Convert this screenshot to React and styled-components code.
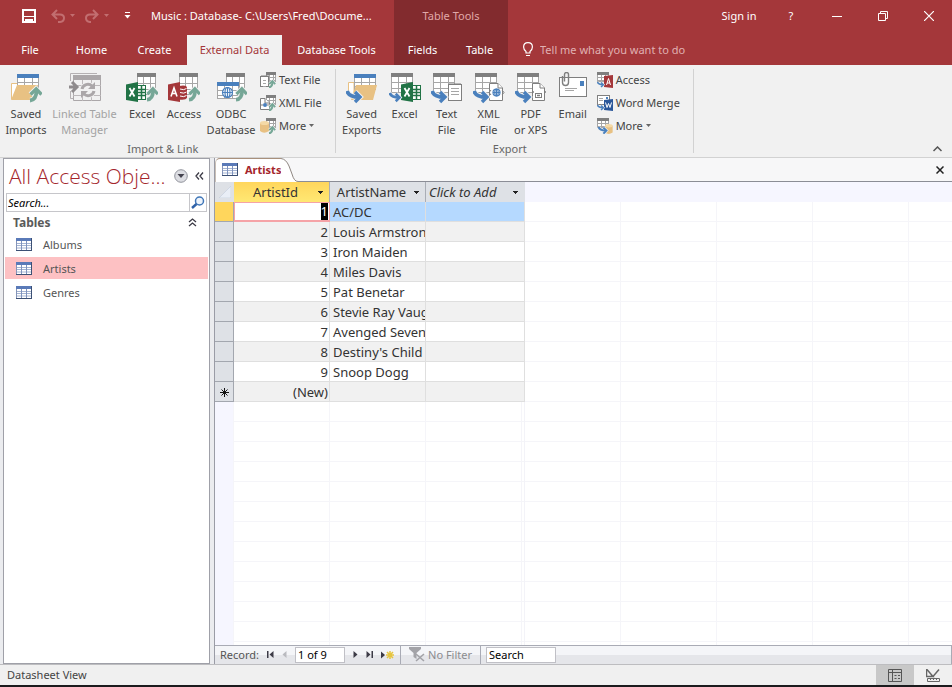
import React, { useState } from "react";
import styled, { createGlobalStyle, css } from "styled-components";

const BLUE = "#4a80bd";
const GREEN = "#76a797";
const GREY = "#7f7f7f";
const FOLDER = "#e8c183";

/* ---------- icon parts ---------- */

const Sheet = ({ x, y, w = 19, h = 20, head = 4, color = GREY, line = "#a6a6a6" }) => {
    const bodyTop = y + head;
    const rowHeight = (h - head) / 3;
    const colWidth = w / 3;
    return (
        <g>
            <rect x={x + 0.5} y={y + 0.5} width={w - 1} height={h - 1} fill="#fff" stroke={line} />
            <rect x={x} y={y} width={w} height={head} fill={color} />
            {[1, 2].map((i) => (
                <path
                    key={i}
                    stroke={line}
                    fill="none"
                    d={`M${x} ${Math.round(bodyTop + i * rowHeight) + 0.5}h${w}M${Math.round(x + i * colWidth) + 0.5} ${bodyTop}v${h - head}`}
                />
            ))}
        </g>
    );
};

const ImportArrow = ({ x = 0, y = 0, scale = 1 }) => (
    <g transform={`translate(${x} ${y}) scale(${scale})`} fill="none">
        <path d="M0 13.5Q6.5 13 6.5 3M0.5 7.5L6.2 2L11.5 7.5" stroke="#f1f1f1" strokeWidth="5.4" />
        <path d="M0 13.5Q6.5 13 6.5 3" stroke={GREEN} strokeWidth="3.8" />
        <path d="M0.5 7.5L6.2 2L11.5 7.5" stroke={GREEN} strokeWidth="3.4" />
    </g>
);

const ExportArrow = ({ x = 0, y = 0, scale = 1 }) => (
    <g transform={`translate(${x} ${y}) scale(${scale})`} fill="none">
        <path d="M1 0Q3 6 13 6M9 1L14 6L9 11" stroke="#f1f1f1" strokeWidth="5.4" />
        <path d="M1 0Q3 6 13 6" stroke={BLUE} strokeWidth="3.8" />
        <path d="M9 1L14 6L9 11" stroke={BLUE} strokeWidth="3.4" />
    </g>
);

const ExcelBook = ({ x, y }) => (
    <g transform={`translate(${x} ${y})`}>
        <rect x="11.5" y="3.5" width="8" height="14" fill="#fff" stroke="#217346" />
        <path d="M12 7.5h7M12 10.5h7M12 13.5h7M15.5 4v13" stroke="#217346" strokeWidth="1.5" />
        <path d="M0 2.5L12 0V20L0 18Z" fill="#217346" />
        <path d="M3.5 6L8.5 14.5M8.5 6L3.5 14.5" stroke="#fff" strokeWidth="1.8" />
    </g>
);

const AccessBook = ({ x, y }) => (
    <g transform={`translate(${x} ${y})`}>
        <path d="M11 4Q19 2.5 19 6V15.5Q18 18.5 11 17.5Z" fill="#a4373a" />
        <path d="M12 7Q16 8.5 18.5 6.5M12 10.5Q16 12 18.5 10M12 14Q16 15.5 18.5 13.5" stroke="#fff" fill="none" />
        <path d="M0 2.5L12 0V20L0 18Z" fill="#a4373a" />
        <path d="M3 14.5L6 6L9 14.5M4 11.5H8" stroke="#fff" strokeWidth="1.6" fill="none" />
    </g>
);

const Globe = ({ cx, cy, r }) => (
    <g fill="#fff" stroke={BLUE} strokeWidth="1.2">
        <circle cx={cx} cy={cy} r={r} />
        <ellipse cx={cx} cy={cy} rx={r / 2} ry={r} fill="none" />
        <path d={`M${cx - r} ${cy}h${r * 2}M${cx} ${cy - r}v${r * 2}`} />
    </g>
);

const Page = ({ x, y, w = 15, h = 17 }) => (
    <g fill="#fff" stroke={GREY} transform={`translate(${x} ${y})`}>
        <path d={`M0.5 0.5H${w - 5}L${w - 0.5} 5V${h - 0.5}H0.5Z`} />
        <path d={`M${w - 5} 0.5V5H${w - 0.5}`} />
    </g>
);

const Notepad = ({ x, y, w = 14, h = 17 }) => (
    <g transform={`translate(${x} ${y})`}>
        <rect x="0.5" y="1.5" width={w - 1} height={h - 2} fill="#fff" stroke={GREY} />
        <path d={`M1.5 1h${w - 2}`} stroke={GREY} strokeWidth="2" strokeDasharray="1 1" />
        <path d={`M3 5.5h${w - 6}M3 8.5h${w - 6}M3 11.5h${w - 6}`} stroke="#a6a6a6" />
    </g>
);

const Cylinder = ({ x, y }) => (
    <g transform={`translate(${x} ${y})`}>
        <path d="M0 2V10Q4 13.5 9 10V2Z" fill={FOLDER} />
        <ellipse cx="4.5" cy="2" rx="4.5" ry="2" fill="#f4d9a6" />
    </g>
);

const Big = ({ children }) => <svg width="32" height="32" viewBox="0 0 32 32" aria-hidden="true">{children}</svg>;
const Small = ({ children }) => <svg width="16" height="16" viewBox="0 0 16 16" aria-hidden="true">{children}</svg>;

/* ---------- ribbon icons ---------- */

const SavedImportsIcon = () => (
    <Big>
        <path d="M1.5 27V11.5H8V27" fill="#fff" stroke={FOLDER} />
        <Sheet x={7} y={2} w={22} h={16} color={BLUE} />
        <path d="M7 13H28L23 28H1Z" fill={FOLDER} />
        <ImportArrow x={20} y={15} />
    </Big>
);

const SavedExportsIcon = () => (
    <Big>
        <path d="M2.5 22V10.5H8V27" fill="#fff" stroke={FOLDER} />
        <Sheet x={8} y={2} w={22} h={16} color={BLUE} />
        <path d="M10 13H31L27 28H5Z" fill={FOLDER} />
        <ExportArrow y={19} />
    </Big>
);

const LinkedTableIcon = () => (
    <Big>
        <path d="M1.5 9V1.5H28M1.5 19V26.5H4" fill="none" stroke="#b5b1b3" />
        <path d="M4.5 4V28.5H31.5V4" fill="#f1f1f1" stroke="#aba7a9" />
        <rect x="4" y="3" width="28" height="5" fill="#aba7a9" />
        <path d="M4 13.5h28M4 23.5h28M13.5 8v6M22.5 8v6M13.5 24v5M22.5 24v5" stroke="#bdb9bb" />
        <circle cx="19" cy="18" r="8" fill="#f1f1f1" />
        <path d="M13 17a6 6 0 0 1 10-3M25 19a6 6 0 0 1-10 3" fill="none" stroke="#aba7a9" strokeWidth="3" />
        <path d="M26 10v7h-7ZM12 26v-7h7Z" fill="#aba7a9" />
        <path d="M0 15h7M3 10l5 5-5 5" fill="none" stroke="#8f8b8d" strokeWidth="3" />
    </Big>
);

const ImportExcelIcon = () => (
    <Big>
        <Sheet x={11} y={1} w={19} h={22} />
        <ExcelBook x={0} y={10} />
        <ImportArrow x={21} y={15} scale={0.95} />
    </Big>
);

const ImportAccessIcon = () => (
    <Big>
        <Sheet x={11} y={1} w={19} h={22} />
        <AccessBook x={0} y={10} />
        <ImportArrow x={21} y={15} scale={0.95} />
    </Big>
);

const OdbcIcon = () => (
    <Big>
        <Sheet x={11} y={1} w={19} h={22} />
        <Sheet x={2} y={10} w={22} h={17} color={BLUE} />
        <Globe cx={12.5} cy={20.5} r={5} />
        <ImportArrow x={21} y={15} scale={0.95} />
    </Big>
);

const ExportExcelIcon = () => (
    <Big>
        <Sheet x={2} y={1} w={22} h={20} />
        <ExcelBook x={12} y={10} />
        <ExportArrow y={21} scale={0.75} />
    </Big>
);

const ExportTextIcon = () => (
    <Big>
        <Sheet x={2} y={1} w={22} h={20} />
        <Notepad x={17} y={11} w={14} h={18} />
        <ExportArrow y={19} />
    </Big>
);

const ExportXmlIcon = () => (
    <Big>
        <Sheet x={2} y={1} w={22} h={20} />
        <Page x={16} y={11} w={14} h={18} />
        <Globe cx={23.5} cy={20.5} r={3.5} />
        <path d="M18 18l-2 2.5 2 2.5M29 18l2 2.5-2 2.5" fill="none" stroke={GREY} />
        <ExportArrow y={19} />
    </Big>
);

const ExportPdfIcon = () => (
    <Big>
        <Sheet x={2} y={1} w={22} h={20} />
        <Page x={17} y={11} w={13} h={18} />
        <rect x="20.5" y="21.5" width="6" height="4" fill="#fff" stroke={GREY} />
        <path d="M18 19v2M30 19v2M22 23.5h3" stroke={GREY} strokeWidth="1.5" />
        <ExportArrow y={19} />
    </Big>
);

const EmailIcon = () => (
    <Big>
        <rect x="2.5" y="5.5" width="27" height="19" fill="#fff" stroke={GREY} />
        <rect x="23" y="9" width="4" height="5" fill={BLUE} />
        <path d="M8 16.5h12M8 18.5h9" stroke="#a6a6a6" />
        <path d="M5.5 4V10.5Q5.5 13.5 8.5 13.5T11.5 10.5V2.5Q11.5 0.5 9.5 0.5T7.5 2.5V9.5" fill="none" stroke={GREY} strokeWidth="1.4" />
    </Big>
);

const SmallSheet = ({ x = 6, y = 0, w = 10 }) => <Sheet x={x} y={y} w={w} h={10} head={3} />;

const TextFileIcon = () => (
    <Small>
        <SmallSheet />
        <Notepad x={0} y={3} w={9} h={12} />
        <ImportArrow x={9} y={8} scale={0.54} />
    </Small>
);

const XmlFileIcon = () => (
    <Small>
        <SmallSheet />
        <Page x={0} y={3} w={10} h={12} />
        <circle cx="5" cy="10" r="2" fill={BLUE} />
        <path d="M2 9v2M8 9v2" stroke={GREY} />
        <ImportArrow x={9} y={8} scale={0.54} />
    </Small>
);

const MoreImportIcon = () => (
    <Small>
        <SmallSheet />
        <Cylinder x={0} y={3} />
        <ImportArrow x={9} y={8} scale={0.54} />
    </Small>
);

const AccessExportIcon = () => (
    <Small>
        <SmallSheet x={0} w={12} />
        <path d="M7 4L16 3V16L7 15Z" fill="#a4373a" />
        <path d="M9.5 13L11.5 6.5L13.5 13M10 11h3" fill="none" stroke="#fff" />
        <ExportArrow y={10} scale={0.45} />
    </Small>
);

const WordMergeIcon = () => (
    <Small>
        <rect x="0.5" y="0.5" width="12" height="9" fill="#fff" stroke={GREY} />
        <path d="M2 3.5h4M2 5.5h4" stroke="#a6a6a6" />
        <rect x="9" y="2" width="2" height="2" fill={BLUE} />
        <path d="M7 5L16 4V16L7 15Z" fill="#2b579a" />
        <path d="M8.5 7.5l1.5 5 1.5-4 1.5 4 1.5-5" fill="none" stroke="#fff" />
        <ExportArrow y={10} scale={0.45} />
    </Small>
);

const MoreExportIcon = () => (
    <Small>
        <SmallSheet x={0} w={12} />
        <g transform="translate(8 6) scale(.85)">
            <Cylinder x={0} y={0} />
        </g>
        <ExportArrow x={1} y={9} scale={0.6} />
    </Small>
);

/* ---------- small glyphs ---------- */

const Caret = ({ color = "currentColor" }) => (
    <svg width="5" height="3" viewBox="0 0 5 3" aria-hidden="true">
        <path d="M0 0h5L2.5 3Z" fill={color} />
    </svg>
);

const HeadCaret = () => (
    <svg width="7" height="5" viewBox="0 0 7 5" aria-hidden="true">
        <path d="M1 1h5v1h-1v1h-1v1h-1v-1h-1v-1h-1Z" fill="#222" />
    </svg>
);

const TableIcon = () => (
    <svg width="16" height="13" viewBox="0 0 16 13" aria-hidden="true">
        <rect x="0.5" y="0.5" width="15" height="12" fill="#fff" stroke="#8494b8" />
        <path d="M0 1.5h16" stroke="#5a7ab8" strokeWidth="3" />
        <path d="M1 5.5h14M1 7.5h14M1 10h14" stroke="#a4b4d3" />
        <path d="M5.5 3v9M10.5 3v9" stroke="#7f93bd" />
        <path d="M0 12.5h16M15.5 0v13" stroke="#3c5074" />
    </svg>
);

/* ---------- data ---------- */

const ribbonTabs = [
    { name: "File", width: 60 },
    { name: "Home", width: 63 },
    { name: "Create", width: 63 },
    { name: "External Data", width: 97 },
    { name: "Database Tools", width: 107 },
];

const importButtons = [
    { label: "Saved\nImports", icon: <SavedImportsIcon />, width: 44 },
    { label: "Linked Table\nManager", icon: <LinkedTableIcon />, width: 73, disabled: true },
    { label: "Excel", icon: <ImportExcelIcon />, width: 42 },
    { label: "Access", icon: <ImportAccessIcon />, width: 42 },
    { label: "ODBC\nDatabase", icon: <OdbcIcon />, width: 52 },
];

const exportButtons = [
    { label: "Saved\nExports", icon: <SavedExportsIcon />, width: 44 },
    { label: "Excel", icon: <ExportExcelIcon />, width: 42 },
    { label: "Text\nFile", icon: <ExportTextIcon />, width: 42 },
    { label: "XML\nFile", icon: <ExportXmlIcon />, width: 42 },
    { label: "PDF\nor XPS", icon: <ExportPdfIcon />, width: 42 },
    { label: "Email", icon: <EmailIcon />, width: 42 },
];

const importSmall = [
    { label: "Text File", icon: <TextFileIcon /> },
    { label: "XML File", icon: <XmlFileIcon /> },
    { label: "More", icon: <MoreImportIcon />, menu: true },
];

const exportSmall = [
    { label: "Access", icon: <AccessExportIcon /> },
    { label: "Word Merge", icon: <WordMergeIcon /> },
    { label: "More", icon: <MoreExportIcon />, menu: true },
];

const artists = [
    "AC/DC",
    "Louis Armstrong",
    "Iron Maiden",
    "Miles Davis",
    "Pat Benetar",
    "Stevie Ray Vaughan",
    "Avenged Sevenfold",
    "Destiny's Child",
    "Snoop Dogg",
];

/* ---------- components ---------- */

const RibbonGroup = ({ title, buttons, smallButtons }) => (
    <Group>
        <GroupBody>
            {buttons.map((b) => (
                <BigButton key={b.label} $width={b.width} disabled={b.disabled}>
                    {b.icon}
                    <span>{b.label}</span>
                </BigButton>
            ))}
            <SmallColumn>
                {smallButtons.map((b) => (
                    <SmallButton key={b.label}>
                        {b.icon}
                        {b.label}
                        {b.menu && <Caret color="#666" />}
                    </SmallButton>
                ))}
            </SmallColumn>
        </GroupBody>
        <GroupTitle>{title}</GroupTitle>
    </Group>
);

const Header = ({ tab, setTab }) => (
    <TopBar>
        <TopColumn>
            <TitleRow>
                <QuickButton aria-label="Save" $after={5}>
                    <svg width="14" height="14" viewBox="0 0 14 14">
                        <path d="M1 1h12v12H1Z" fill="none" stroke="#fff" strokeWidth="2" />
                        <path d="M1 7.5h12" stroke="#fff" />
                        <path d="M3 10h8v4h-2v-2h-2v2H3Z" fill="#fff" />
                    </svg>
                </QuickButton>
                <QuickButton aria-label="Undo" disabled>
                    <svg width="14" height="14" viewBox="0 0 14 14" fill="none" stroke="currentColor" strokeWidth="2">
                        <path d="M6 1L1.5 5.5L6 10M2 5.5H9Q13 5.5 13 9T9 13H7" />
                    </svg>
                    <Caret />
                </QuickButton>
                <QuickButton aria-label="Redo" disabled $after={5}>
                    <svg width="14" height="14" viewBox="0 0 14 14" fill="none" stroke="currentColor" strokeWidth="2">
                        <path d="M8 1L12.5 5.5L8 10M12 5.5H5Q1 5.5 1 9T5 13H6" />
                    </svg>
                    <Caret />
                </QuickButton>
                <QuickButton aria-label="Customize toolbar" $after={10}>
                    <svg width="7" height="7" viewBox="0 0 7 7">
                        <path d="M1 0.5h5" stroke="#fff" />
                        <path d="M0.5 3h6L3.5 6.5Z" fill="#fff" />
                    </svg>
                </QuickButton>
                <Title>Music : Database- C:\Users\Fred\Docume...</Title>
            </TitleRow>
            <TabRow>
                {ribbonTabs.map((t) => (
                    <RibbonTab key={t.name} $width={t.width} $active={tab === t.name} onClick={() => setTab(t.name)}>
                        {t.name}
                    </RibbonTab>
                ))}
            </TabRow>
        </TopColumn>
        <ContextColumn>
            <ContextTitle>Table Tools</ContextTitle>
            <TabRow>
                <RibbonTab $width={57}>Fields</RibbonTab>
                <RibbonTab $width={57}>Table</RibbonTab>
            </TabRow>
        </ContextColumn>
        <TopColumn $grow>
            <WindowRow>
                <SignIn href="#signin">Sign in</SignIn>
                <WindowButton aria-label="Help">?</WindowButton>
                <WindowButton aria-label="Minimize">
                    <svg width="10" height="10" viewBox="0 0 10 10"><path d="M0 5.5h10" stroke="#fff" /></svg>
                </WindowButton>
                <WindowButton aria-label="Restore">
                    <svg width="10" height="10" viewBox="0 0 10 10" fill="none" stroke="#fff">
                        <path d="M0.5 2.5h7v7h-7ZM2.5 2.5V0.5h7v7H7.5" />
                    </svg>
                </WindowButton>
                <WindowButton aria-label="Close">
                    <svg width="10" height="10" viewBox="0 0 10 10"><path d="M0 0L10 10M10 0L0 10" stroke="#fff" strokeWidth="1.2" /></svg>
                </WindowButton>
            </WindowRow>
            <TellMe>
                <svg width="10" height="15" viewBox="0 0 10 15" fill="none" stroke="#fff" strokeWidth="1.2" aria-hidden="true">
                    <path d="M3 11V9.5Q0.6 7.5 0.6 5Q0.6 0.7 5 0.7T9.4 5Q9.4 7.5 7 9.5V11ZM3 13.5h4" />
                </svg>
                <input aria-label="Tell me what you want to do" placeholder="Tell me what you want to do" />
            </TellMe>
        </TopColumn>
    </TopBar>
);

const NavigationPane = () => {
    const [selected, setSelected] = useState("Artists");

    return (
        <NavPane>
            <NavHead>
                <h1>All Access Obje...</h1>
                <PlainButton aria-label="Filter objects">
                    <svg width="14" height="14" viewBox="0 0 14 14">
                        <circle cx="7" cy="7" r="6.3" fill="#dcdde2" stroke="#92949d" />
                        <path d="M3.5 5h7L7 9Z" fill="#44434f" />
                    </svg>
                </PlainButton>
                <PlainButton aria-label="Collapse pane">
                    <svg width="9" height="8" viewBox="0 0 9 8" fill="none" stroke="#3c3b46" strokeWidth="1.3">
                        <path d="M4 0.5L1 4L4 7.5M8 0.5L5 4L8 7.5" />
                    </svg>
                </PlainButton>
            </NavHead>
            <NavSearch>
                <input aria-label="Search objects" placeholder="Search..." />
                <button aria-label="Search">
                    <svg width="14" height="13" viewBox="0 0 14 13" fill="none">
                        <circle cx="8.5" cy="5" r="4" stroke="#3f76b8" strokeWidth="1.5" fill="#eef4fb" />
                        <path d="M5.5 8L1 12" stroke="#2f62a8" strokeWidth="2.4" />
                    </svg>
                </button>
            </NavSearch>
            <NavSection>
                Tables
                <svg width="9" height="9" viewBox="0 0 9 9" fill="none" stroke="#3c3b46" strokeWidth="1.3" aria-hidden="true">
                    <path d="M1 4L4.5 1L8 4M1 8L4.5 5L8 8" />
                </svg>
            </NavSection>
            {["Albums", "Artists", "Genres"].map((name) => (
                <NavItem key={name} $selected={selected === name} onClick={() => setSelected(name)}>
                    <TableIcon />
                    {name}
                </NavItem>
            ))}
        </NavPane>
    );
};

const Datasheet = () => (
    <SheetArea>
        <SheetColumn>
            <DataTable>
                <colgroup>
                    <col width="19" />
                    <col width="96" />
                    <col width="96" />
                    <col width="99" />
                </colgroup>
                <thead>
                    <tr>
                        <Corner aria-label="Select all">
                            <svg width="12" height="12" viewBox="0 0 12 12" aria-hidden="true">
                                <path d="M12 0V12H0Z" fill="#e9eef6" stroke="#c3cddc" strokeWidth="0.6" />
                            </svg>
                        </Corner>
                        <HeadCell $active><div><span>ArtistId</span><HeadCaret /></div></HeadCell>
                        <HeadCell><div><span>ArtistName</span><HeadCaret /></div></HeadCell>
                        <HeadCell $add><div><span>Click to Add</span><HeadCaret /></div></HeadCell>
                    </tr>
                </thead>
                <tbody>
                    {artists.map((name, i) => (
                        <DataRow key={name} $current={i === 0}>
                            <RowSelector $current={i === 0} />
                            <IdCell $current={i === 0}>{i === 0 ? <mark>1</mark> : i + 1}</IdCell>
                            <td>{name}</td>
                            <td />
                        </DataRow>
                    ))}
                    <DataRow>
                        <RowSelector>
                            <svg width="9" height="9" viewBox="0 0 9 9" stroke="#111" aria-hidden="true">
                                <path d="M4.5 0v9M0 4.5h9M1.5 1.5l6 6M7.5 1.5l-6 6" />
                            </svg>
                        </RowSelector>
                        <IdCell>(New)</IdCell>
                        <td />
                        <td />
                    </DataRow>
                </tbody>
            </DataTable>
            <BlankRows />
        </SheetColumn>
        <BlankColumns />
    </SheetArea>
);

const RecordBar = () => (
    <Records>
        <RecordNav>
            <label htmlFor="record">Record:</label>
            <PlainButton aria-label="First record">
                <svg width="7" height="7" viewBox="0 0 7 7"><path d="M0 0h1.5v7H0ZM6.5 0v7L2.5 3.5Z" fill="#3c3b46" /></svg>
            </PlainButton>
            <PlainButton aria-label="Previous record" disabled>
                <svg width="5" height="7" viewBox="0 0 5 7"><path d="M4.5 0v7L0.5 3.5Z" fill="#b9babf" /></svg>
            </PlainButton>
            <RecordInput id="record" defaultValue="1 of 9" $width={50} />
            <PlainButton aria-label="Next record">
                <svg width="5" height="7" viewBox="0 0 5 7"><path d="M0.5 0v7L4.5 3.5Z" fill="#3c3b46" /></svg>
            </PlainButton>
            <PlainButton aria-label="Last record">
                <svg width="7" height="7" viewBox="0 0 7 7"><path d="M5.5 0H7v7H5.5ZM0.5 0v7L4.5 3.5Z" fill="#3c3b46" /></svg>
            </PlainButton>
            <PlainButton aria-label="New record">
                <svg width="13" height="8" viewBox="0 0 13 8">
                    <path d="M0 0.5v7L4 4Z" fill="#3c3b46" />
                    <path d="M9 0v8M5 4h8M6 1l6 6M12 1L6 7" stroke="#e6c53f" strokeWidth="1.5" />
                </svg>
            </PlainButton>
        </RecordNav>
        <FilterButton disabled>
            <svg width="16" height="15" viewBox="0 0 16 15" aria-hidden="true">
                <path d="M0 0h12v2L7.5 6v6l-3-2V6L0 2Z" fill="#a3a3a8" />
                <path d="M7 7l8 7M15 7l-8 7" stroke="#a3a3a8" strokeWidth="1.6" />
            </svg>
            No Filter
        </FilterButton>
        <RecordInput aria-label="Search records" defaultValue="Search" $width={70} />
    </Records>
);

const App = () => {
    const [tab, setTab] = useState("External Data");

    return (
        <>
            <GlobalStyle />
            <Window>
                <Header tab={tab} setTab={setTab} />
                <Ribbon>
                    <RibbonGroup title="Import & Link" buttons={importButtons} smallButtons={importSmall} />
                    <RibbonGroup title="Export" buttons={exportButtons} smallButtons={exportSmall} />
                    <CollapseButton aria-label="Collapse ribbon">
                        <svg width="9" height="6" viewBox="0 0 9 6" fill="none" stroke="#555" strokeWidth="1.5">
                            <path d="M0.5 5L4.5 1L8.5 5" />
                        </svg>
                    </CollapseButton>
                </Ribbon>
                <Workspace>
                    <NavigationPane />
                    <Document>
                        <TabStrip>
                            <DocTab>
                                <DocTabFace>
                                    <TableIcon />
                                    Artists
                                </DocTabFace>
                                <svg width="17" height="24" viewBox="0 0 17 24" aria-hidden="true">
                                    <path d="M0 0.5Q5 1 8 8L11 16Q13 23.5 17 23.5V24H0Z" fill="#fff" />
                                    <path d="M0 0.5Q5 1 8 8L11 16Q13 23.5 17 23.5" fill="none" stroke="#8f8782" />
                                </svg>
                            </DocTab>
                            <StripRest>
                                <PlainButton aria-label="Close table">
                                    <svg width="8" height="8" viewBox="0 0 8 8"><path d="M0.5 0.5l7 7M7.5 0.5l-7 7" stroke="#222" strokeWidth="1.5" /></svg>
                                </PlainButton>
                            </StripRest>
                        </TabStrip>
                        <Datasheet />
                        <RecordBar />
                    </Document>
                </Workspace>
                <StatusBar>
                    <span>Datasheet View</span>
                    <ViewButton aria-label="Datasheet view" $active>
                        <svg width="14" height="13" viewBox="0 0 14 13" fill="none" stroke="#555">
                            <path d="M0.5 0.5h13v12h-13ZM0 3.5h14M4.5 1v12M6.5 6.5h2M10 6.5h2M6.5 9.5h2M10 9.5h2" />
                        </svg>
                    </ViewButton>
                    <ViewButton aria-label="Design view">
                        <svg width="14" height="13" viewBox="0 0 14 13" fill="none" stroke="#666">
                            <path d="M0.5 0V7.5H7ZM5 6L7 7.5L13 0.5" strokeWidth="1.5" />
                            <path d="M1.5 9.5h12v3h-12ZM4.5 10v1M7.5 10v1M10.5 10v1" />
                        </svg>
                    </ViewButton>
                </StatusBar>
            </Window>
        </>
    );
};

export default App;

const GlobalStyle = createGlobalStyle`
    * {
        box-sizing: border-box;
    }
    body {
        margin: 0;
        font-family: "Noto Sans", "Open Sans", sans-serif;
        font-size: 11px;
        color: #444;
    }
    button, input {
        font: inherit;
        color: inherit;
        border: 0;
        padding: 0;
        background: none;
        border-radius: 0;
        outline: none;
    }
    svg {
        display: block;
        flex: none;
    }
`;

const Window = styled.div`
    height: 100vh;
    display: flex;
    flex-direction: column;
    background: #f0f0f0;
    border-bottom: 2px solid #1b1b1d;
`;

const TopBar = styled.header`
    display: flex;
    background: #a4373a;
    color: #fff;
`;

const TopColumn = styled.div`
    flex: ${({ $grow }) => ($grow ? "1" : "0 0 auto")};
    padding-right: ${({ $grow }) => ($grow ? "0" : "4px")};
    min-width: 0;
`;

const ContextColumn = styled.div`
    background: #822b2e;
`;

const ContextTitle = styled.div`
    height: 35px;
    line-height: 32px;
    text-align: center;
    color: #e0a9a9;
`;

const TitleRow = styled.div`
    height: 35px;
    padding: 0 0 4px 22px;
    display: flex;
    align-items: center;
    gap: 10px;
`;

const QuickButton = styled.button`
    display: flex;
    align-items: center;
    gap: 5px;
    margin-right: ${({ $after = 0 }) => $after}px;

    &:disabled {
        color: #c26e70;
    }
`;

const Title = styled.span`
    white-space: nowrap;
`;

const TabRow = styled.nav`
    height: 30px;
    display: flex;
`;

const RibbonTab = styled.button`
    width: ${({ $width }) => $width}px;
    padding-bottom: 2px;
    white-space: nowrap;

    ${({ $active }) =>
        $active &&
        css`
            background: #f1f1f1;
            color: #a4373a;
            border-left: 1px solid #a4373a;
            border-right: 1px solid #a4373a;
        `}
`;

const WindowRow = styled.div`
    height: 35px;
    padding-bottom: 4px;
    display: flex;
    justify-content: flex-end;
    align-items: stretch;
`;

const SignIn = styled.a`
    width: 58px;
    display: flex;
    align-items: center;
    justify-content: center;
    color: #fff;
    text-decoration: none;
`;

const WindowButton = styled.button`
    width: 46px;
    display: flex;
    align-items: center;
    justify-content: center;
`;

const TellMe = styled.label`
    height: 30px;
    padding: 0 0 2px 15px;
    display: flex;
    align-items: center;
    gap: 7px;

    input {
        width: 220px;
    }
    input::placeholder {
        color: #e0b1b2;
        opacity: 1;
    }
`;

const Ribbon = styled.section`
    display: flex;
    padding-top: 3px;
    background: #f1f1f1;
    border-bottom: 1px solid #d2d2d2;
`;

const Group = styled.div`
    position: relative;
    padding: 0 14px 0 4px;

    &::after {
        content: "";
        position: absolute;
        top: 1px;
        right: 0;
        bottom: 4px;
        width: 1px;
        background: #d2d2d2;
    }
`;

const GroupBody = styled.div`
    height: 73px;
    display: flex;
`;

const GroupTitle = styled.div`
    line-height: 16px;
    text-align: center;
    color: #666;
`;

const BigButton = styled.button`
    width: ${({ $width }) => $width}px;
    padding-top: 4px;
    display: flex;
    flex-direction: column;
    align-items: center;
    gap: 2px;
    line-height: 16px;

    span {
        white-space: pre;
    }
    &:disabled {
        color: #a3a3a3;
    }
`;

const SmallColumn = styled.div`
    padding-left: 3px;
    display: flex;
    flex-direction: column;
`;

const SmallButton = styled.button`
    height: 23px;
    display: flex;
    align-items: center;
    gap: 3px;
    white-space: nowrap;
`;

const CollapseButton = styled.button`
    margin-left: auto;
    padding: 0 10px 5px;
    align-self: flex-end;
`;

const Workspace = styled.main`
    flex: 1;
    min-height: 0;
    display: flex;
    gap: 4px;
    padding-left: 3px;
    background: #ebecef;
`;

const NavPane = styled.aside`
    width: 207px;
    padding: 0 1px;
    background: #fff;
    border: 1px solid #9fa0a8;
`;

const NavHead = styled.div`
    height: 34px;
    padding: 0 4px;
    display: flex;
    align-items: center;
    gap: 7px;

    h1 {
        flex: 1;
        margin: 0;
        font-family: "Open Sans", "Noto Sans", sans-serif;
        font-size: 21px;
        font-weight: 300;
        line-height: 34px;
        white-space: nowrap;
        color: #a4262c;
    }
`;

const PlainButton = styled.button`
    display: flex;
    align-items: center;
`;

const NavSearch = styled.div`
    height: 19px;
    margin: 0 1px;
    display: flex;
    border: 1px solid #c6c6ca;

    input {
        flex: 1;
        min-width: 0;
        padding-left: 1px;
        font-style: italic;
    }
    input::placeholder {
        color: #000;
        opacity: 1;
    }
    button {
        width: 17px;
        border-left: 1px solid #c6c6ca;
        display: flex;
        align-items: center;
        justify-content: center;
    }
`;

const NavSection = styled.div`
    height: 21px;
    padding: 0 11px 0 8px;
    display: flex;
    align-items: center;
    justify-content: space-between;
    font-size: 12px;
    font-weight: 700;
    color: #5a5a5a;
`;

const NavItem = styled.button`
    width: 100%;
    height: 22px;
    margin-bottom: 2px;
    padding-left: 11px;
    display: flex;
    align-items: center;
    gap: 11px;
    color: #555;
    background: ${({ $selected }) => ($selected ? "#fdc1c3" : "transparent")};
`;

const Document = styled.section`
    flex: 1;
    min-width: 0;
    display: flex;
    flex-direction: column;
    border-left: 1px solid #9a9ca6;
`;

const TabStrip = styled.div`
    height: 24px;
    display: flex;
    background: #f7f7f8;
`;

const DocTab = styled.div`
    display: flex;
`;

const DocTabFace = styled.button`
    padding: 0 0 2px 6px;
    display: flex;
    align-items: center;
    gap: 7px;
    background: #fff;
    border-top: 1px solid #a8907c;
    border-left: 1px solid #c9bfb6;
    border-top-left-radius: 5px;
    font-weight: 700;
    color: #a4262c;
`;

const StripRest = styled.div`
    flex: 1;
    padding-right: 8px;
    display: flex;
    align-items: center;
    justify-content: flex-end;
    border-bottom: 1px solid #8b8d96;
`;

const SheetArea = styled.div`
    flex: 1;
    min-height: 0;
    display: flex;
    overflow: hidden;
    background: #fff;
`;

const SheetColumn = styled.div`
    width: 310px;
    display: flex;
    flex-direction: column;
`;

const DataTable = styled.table`
    width: 100%;
    table-layout: fixed;
    border-collapse: separate;
    border-spacing: 0;
    font-size: 13px;
    line-height: 19px;
    color: #333;

    th, td {
        height: 20px;
        padding: 0;
        overflow: hidden;
        white-space: nowrap;
        font-weight: 400;
    }
    tbody td {
        padding-top: 1px;
        line-height: 18px;
    }
`;

const Corner = styled.td`
    background: #dee1e6;

    svg {
        margin-left: 4px;
    }
`;

const HeadCell = styled.th`
    background: ${({ $active }) => ($active ? "linear-gradient(#ffd65c, #ffe873)" : "#dee1e6")};
    border-right: 1px solid ${({ $add }) => ($add ? "#dee1e6" : "#a9adb5")};
    font-style: ${({ $add }) => ($add ? "italic" : "normal")};
    text-align: ${({ $add }) => ($add ? "left" : "center")};

    div {
        display: flex;
        align-items: center;
        padding: 0 5px 0 ${({ $add }) => ($add ? "3px" : "0")};
    }
    span {
        flex: 1;
        line-height: 18px;
        padding-bottom: 1px;
    }
`;

const RowSelector = styled.td`
    background: ${({ $current }) => ($current ? "#ffd65c" : "#dee1e6")};
    border-right: 1px solid #a3a7af;
    border-bottom: 1px solid #a3a7af;

    svg {
        margin: 0 auto;
    }
`;

const DataRow = styled.tr`
    &:nth-child(even) {
        background: #f1f1f1;
    }
    td:nth-child(n + 3) {
        padding-left: 3px;
        border-right: 1px solid #dfdfdf;
        border-bottom: 1px solid #dfdfdf;
        background: ${({ $current }) => ($current ? "#b5d9ff" : "transparent")};
    }
`;

const IdCell = styled.td`
    text-align: right;
    border: 0 solid #dfdfdf;
    border-width: 0 1px 1px 0;

    && {
        padding-right: 1px;
    }
    ${({ $current }) =>
        $current &&
        css`
            border: 1px solid #f5a3a7;
            border-bottom-width: 2px;

            &&& {
                padding-top: 0;
                line-height: 17px;
            }
        `}
    mark {
        display: inline-block;
        background: #000;
        color: #fff;
    }
`;

const BlankRows = styled.div`
    flex: 1;
    border-right: 1px solid #f3f3f8;
    background:
        linear-gradient(to right, #f6f6ff 18px, transparent 18px),
        repeating-linear-gradient(to bottom, transparent 0 19px, #f5f5f9 19px 20px),
        repeating-linear-gradient(to right, #f5f5f9 0 1px, transparent 1px 96px) 18px 0;
`;

const BlankColumns = styled.div`
    flex: 1;
    background:
        linear-gradient(to bottom, #f6f6ff 20px, transparent 20px),
        repeating-linear-gradient(to bottom, transparent 0 19px, #f5f5f9 19px 20px),
        repeating-linear-gradient(to right, transparent 0 95px, #f5f5f9 95px 96px);
`;

const Records = styled.div`
    height: 19px;
    display: flex;
    align-items: center;
    background: linear-gradient(#f4f5f8 50%, #e5e6ea 50%);
    border-top: 1px solid #a9abb5;
    border-right: 1px solid #a9abb5;
    color: #555;
`;

const RecordNav = styled.div`
    height: 100%;
    padding: 0 6px 1px 5px;
    display: flex;
    align-items: center;
    gap: 8px;
    border-right: 1px solid #a9abb5;
`;

const RecordInput = styled.input`
    width: ${({ $width }) => $width}px;
    height: 16px;
    padding: 0 0 1px 2px;
    background: #fff;
    border: 1px solid #c0c0c6;
    color: #000;
`;

const FilterButton = styled.button`
    height: 100%;
    margin-right: 5px;
    padding: 0 8px 1px;
    display: flex;
    align-items: center;
    gap: 3px;
    border-right: 1px solid #a9abb5;
    color: #8c8c90;
`;

const StatusBar = styled.footer`
    height: 21px;
    display: flex;
    align-items: stretch;
    border-top: 1px solid #bdbdc0;

    span {
        flex: 1;
        padding-left: 7px;
        line-height: 20px;
    }
`;

const ViewButton = styled.button`
    width: 38px;
    display: flex;
    align-items: center;
    justify-content: center;
    background: ${({ $active }) => ($active ? "#c8c8c8" : "transparent")};
`;
